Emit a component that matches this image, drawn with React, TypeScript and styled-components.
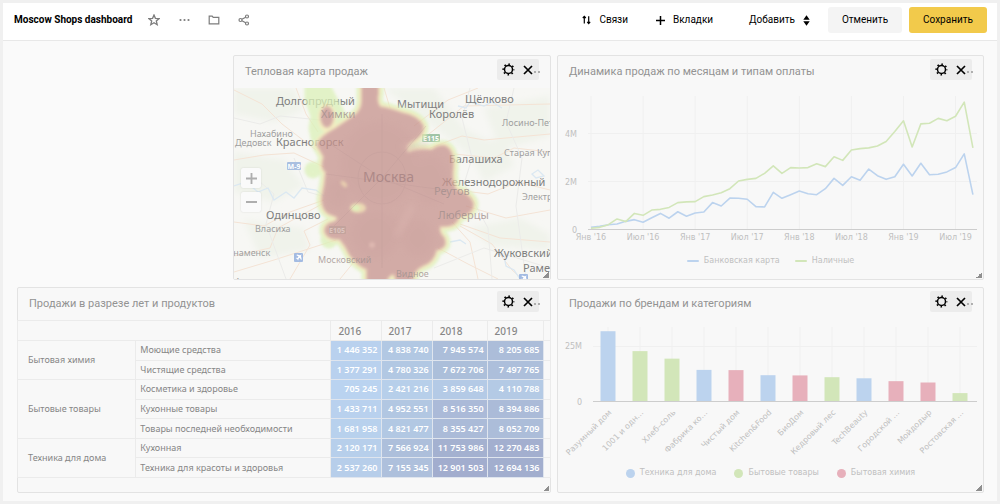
import React from "react";
import styled, { createGlobalStyle } from "styled-components";

const HEADING_FONT = `Roboto, "Noto Sans", sans-serif`;
const UI_FONT = `"Noto Sans", "Open Sans", sans-serif`;
const CHART_FONT = `"DejaVu Sans", sans-serif`;

const palette = {
  blue: "#bcd3ee",
  green: "#d2e6b9",
  pink: "#e7b0bb",
  grid: "#f0f0f0",
  axis: "#cdcdcd",
  label: "#c0c0c0",
};

const GlobalStyle = createGlobalStyle`
  *, *::before, *::after { box-sizing: border-box; }
  body {
    margin: 0;
    padding: 3px;
    background: #f0f0f0;
    font-family: ${UI_FONT};
    color: #000;
  }
  button { font-family: ${HEADING_FONT}; cursor: pointer; }
`;

const Page = styled.div`
  background: #fafafa;
`;

const Toolbar = styled.header`
  display: flex;
  align-items: center;
  justify-content: space-between;
  height: 38px;
  padding: 0 10px 3px 11px;
  background: #fff;
  border-bottom: 1px solid #e8e8e8;
`;

const ToolbarGroup = styled.div<{ $gap: number }>`
  display: flex;
  align-items: center;
  gap: ${(p) => p.$gap}px;
`;

const PageTitle = styled.h1`
  margin: 0;
  font-family: ${HEADING_FONT};
  font-size: 10px;
  line-height: 16px;
  font-weight: 700;
  white-space: nowrap;
`;

const IconButton = styled.button`
  display: flex;
  align-items: center;
  justify-content: center;
  width: 14px;
  height: 14px;
  padding: 0;
  border: 0;
  background: none;
  color: #7c7c7c;
`;

const TextButton = styled.button<{ $lead?: number }>`
  display: flex;
  align-items: center;
  gap: 8px;
  padding: 0 0 0 ${(p) => p.$lead ?? 10}px;
  border: 0;
  background: none;
  color: #000;
  font-size: 10px;
  line-height: 16px;
`;

const ActionButton = styled.button<{ $primary?: boolean }>`
  height: 26px;
  width: ${(p) => (p.$primary ? 78 : 74)}px;
  padding: 0;
  border: 0;
  border-radius: 3px;
  background: ${(p) => (p.$primary ? "#f2ca4b" : "#f4f4f4")};
  color: #000;
  font-size: 10px;
  line-height: 16px;
`;

const Board = styled.main`
  display: grid;
  grid-template-columns: 210fr 318fr 427fr;
  grid-template-rows: 225px 206px;
  gap: 7px 6px;
  padding: 14px 13px 8px 14px;
`;

const Card = styled.section<{ $columns: string }>`
  position: relative;
  grid-column: ${(p) => p.$columns};
  display: flex;
  flex-direction: column;
  min-width: 0;
  border: 1px solid #e3e3e3;
  border-radius: 2px;
  background: #f8f8f8;
`;

const CardHeader = styled.div`
  display: flex;
  align-items: flex-start;
  justify-content: space-between;
  height: 32px;
  padding: 3px 11px 0;
`;

const CardTitle = styled.h2`
  margin: 0;
  padding-top: 5px;
  font-family: ${HEADING_FONT};
  font-size: 11px;
  line-height: 16px;
  font-weight: 400;
  color: #939393;
  white-space: nowrap;
`;

const CardControls = styled.div`
  position: relative;
  display: flex;
  align-items: center;
  gap: 6px;
  height: 21px;
  padding: 0 4px;
  border-radius: 2px;
  background: #ececec;
`;

const ControlButton = styled(IconButton)`
  color: #000;
`;

const MoreDots = styled.span`
  position: absolute;
  right: -1px;
  top: 12px;
  display: flex;
  gap: 2px;
  &::before, &::after {
    content: "";
    width: 2px;
    height: 2px;
    border-radius: 1px;
    background: #9a9a9a;
  }
`;

const ResizeHandle = styled.span`
  position: absolute;
  right: 1px;
  bottom: 1px;
  width: 6px;
  height: 6px;
  background: linear-gradient(135deg, transparent 50%, #8f8f8f 50%);
`;

const MapArea = styled.div`
  position: relative;
  flex: 1;
  min-height: 0;
  overflow: hidden;
`;

const MapDrawing = styled.svg`
  display: block;
  width: 100%;
  height: 100%;
  font-family: ${UI_FONT};
`;

const MapZoom = styled.div`
  position: absolute;
  left: 7px;
  top: 80px;
  display: flex;
  flex-direction: column;
  gap: 4px;
`;

const MapZoomButton = styled.button`
  display: flex;
  align-items: center;
  justify-content: center;
  width: 20px;
  height: 20px;
  padding: 0;
  border: 0;
  border-radius: 2px;
  background: #fafafa;
  box-shadow: 0 0 2px rgba(0, 0, 0, 0.12);
  color: #aeaeae;
`;

const ChartDrawing = styled.svg`
  display: block;
  width: 100%;
  height: auto;
  font-family: ${CHART_FONT};
  font-size: 8px;
  fill: ${palette.label};
`;

const Legend = styled.ul<{ $gap: number }>`
  display: flex;
  justify-content: center;
  gap: ${(p) => p.$gap}px;
  margin: 1px 0 0;
  padding: 0;
  list-style: none;
`;

const LegendItem = styled.li`
  display: flex;
  align-items: center;
  gap: 5px;
  font-family: ${CHART_FONT};
  font-size: 8px;
  line-height: 16px;
  color: ${palette.label};
`;

const LegendMark = styled.span<{ $color: string; $line?: boolean }>`
  width: ${(p) => (p.$line ? 12 : 9)}px;
  height: ${(p) => (p.$line ? 2 : 9)}px;
  border-radius: ${(p) => (p.$line ? 1 : 5)}px;
  background: ${(p) => p.$color};
`;

const PivotTable = styled.table`
  width: calc(100% + 2px);
  height: 158px;
  margin: 0 -1px;
  border-collapse: collapse;
  table-layout: fixed;
  font-size: 9px;
  line-height: 14px;
  color: #868686;
`;

const Col = styled.col<{ $share: number }>`
  width: ${(p) => p.$share}%;
`;

const HeadCell = styled.th`
  height: 20px;
  padding: 0 0 0 7px;
  border: 1px solid #ebebeb;
  font-size: 10px;
  text-align: left;
  font-weight: 500;
`;

const GroupCell = styled.th`
  padding: 0 0 0 10px;
  border: 1px solid #ebebeb;
  text-align: left;
  font-weight: 400;
`;

const NameCell = styled(GroupCell)`
  padding-left: 4px;
`;

const ValueCell = styled.td<{ $tone: string }>`
  padding: 0 3px 0 0;
  border: 1px solid #dfe5ee;
  background: ${(p) => p.$tone};
  color: #fff;
  font-weight: 600;
  text-align: right;
  white-space: nowrap;
`;

const EdgeCell = styled.td`
  padding: 0;
  border: 1px solid #ebebeb;
`;

const GearIcon = () => (
  <svg width="13" height="13" viewBox="0 0 13 13" fill="none" stroke="currentColor" aria-hidden="true">
    <circle cx="6.5" cy="6.5" r="4" strokeWidth="1.5" />
    <circle cx="6.5" cy="6.5" r="5.300" strokeWidth="1.600" strokeDasharray="1.600 2.562" strokeDashoffset="0.800" />
  </svg>
);

const CrossIcon = () => (
  <svg width="10" height="10" viewBox="0 0 10 10" fill="none" stroke="currentColor" strokeWidth="1.700" aria-hidden="true">
    <path d="M1 1l8 8M9 1L1 9" />
  </svg>
);

const StarIcon = () => (
  <svg width="12" height="12" viewBox="0 0 12 12" fill="none" stroke="currentColor" strokeWidth="1.300" aria-hidden="true">
    <path d="M6 1l1.400 3.300 3.700.3-2.800 2.400.9 3.700L6 8.800l-3.200 1.900.9-3.700L.9 4.600l3.700-.3z" />
  </svg>
);

const DotsIcon = () => (
  <svg width="11" height="4" viewBox="0 0 11 4" fill="currentColor" aria-hidden="true">
    <circle cx="1.500" cy="2" r="1.100" />
    <circle cx="5.500" cy="2" r="1.100" />
    <circle cx="9.500" cy="2" r="1.100" />
  </svg>
);

const FolderIcon = () => (
  <svg width="12" height="10" viewBox="0 0 12 10" fill="none" stroke="currentColor" strokeWidth="1.200" aria-hidden="true">
    <path d="M1.200 8.800V1.200h3l1 1.200h5.600v6.400z" />
  </svg>
);

const ShareIcon = () => (
  <svg width="12" height="12" viewBox="0 0 12 12" fill="none" stroke="currentColor" strokeWidth="1.200" aria-hidden="true">
    <circle cx="2.500" cy="6" r="1.500" />
    <circle cx="9" cy="2.500" r="1.500" />
    <circle cx="9" cy="9.500" r="1.500" />
    <path d="M3.900 5.300l3.800-2.100M3.900 6.700l3.800 2.100" />
  </svg>
);

const SortIcon = () => (
  <svg width="9" height="10" viewBox="0 0 9 10" fill="none" stroke="currentColor" strokeWidth="1.200" aria-hidden="true">
    <path d="M2.300 8.500V1.500M.8 3l1.500-1.600L3.800 3M6.700 1.200v7.200M5.200 6.900l1.500 1.600 1.500-1.600" />
  </svg>
);

const PlusIcon = ({ size = 9 }: { size?: number }) => (
  <svg width={size} height={size} viewBox="0 0 9 9" stroke="currentColor" strokeWidth="1.500" aria-hidden="true">
    <path d="M4.500 0v9M0 4.500h9" />
  </svg>
);

const StepperIcon = () => (
  <svg width="7" height="11" viewBox="0 0 7 11" fill="currentColor" aria-hidden="true">
    <path d="M3.500 .3L6.700 4.700H.3zM3.500 10.700L.3 6.300h6.400z" />
  </svg>
);

function Widget({ title, columns, children }: { title: string; columns: string; children: React.ReactNode }) {
  return (
    <Card $columns={columns}>
      <CardHeader>
        <CardTitle>{title}</CardTitle>
        <CardControls>
          <ControlButton aria-label="Настроить"><GearIcon /></ControlButton>
          <ControlButton aria-label="Удалить"><CrossIcon /></ControlButton>
          <MoreDots />
        </CardControls>
      </CardHeader>
      {children}
      <ResizeHandle />
    </Card>
  );
}

type Place = [name: string, x: number, y: number];

const cities: Place[] = [
  ["Долгопрудный", 42, 17],
  ["Мытищи", 163, 20],
  ["Щёлково", 231, 15],
  ["Королёв", 195, 30],
  ["Красногорск", 42, 58],
  ["Балашиха", 215, 75],
  ["Железнодорожный", 208, 98],
  ["Одинцово", 32, 131],
  ["Жуковский", 260, 169],
  ["Раменское", 289, 184],
];

const hazyCities: Place[] = [
  ["Химки", 87, 30],
  ["Реутов", 200, 107],
  ["Люберцы", 204, 131],
];

const towns: Place[] = [
  ["Лосино-Петровский", 268, 38],
  ["Нахабино", 16, 49],
  ["Дедовск", 1, 58],
  ["Старая Купавна", 270, 68],
  ["Электроугли", 288, 112],
  ["Власиха", 21, 144],
  ["Знаменск", -6, 168],
  ["Апрелевка", 1, 197],
];

const hazyTowns: Place[] = [
  ["Московский", 84, 175],
  ["Видное", 162, 189],
];

const HEAT =
  "M128 -6 L128 10 Q129 22 120 28 Q108 36 101 41 Q86 49 83 57 Q87 63 90 69 Q86 80 92 84 Q91 98 88 110 Q88 124 98 127 Q108 130 100 134 Q90 136 91 144 Q94 152 106 151 Q112 158 116 167 Q124 178 133 181 L133 197 L151 197 Q154 186 160 186 L164 197 L178 197 Q178 182 188 178 Q200 174 202 162 Q214 160 210 150 Q204 144 206 138 Q222 140 225 128 Q240 126 239 115 Q236 106 222 102 Q217 92 219 80 Q220 62 211 58 Q204 57 198 62 Q184 60 174 65 Q170 60 176 54 Q190 48 189 38 Q184 28 168 25 Q154 20 146 19 Q142 14 144 6 L144 -6 Z";

const Labels = ({ places }: { places: Place[] }) => (
  <>
    {places.map(([name, x, y]) => <text key={name} x={x} y={y}>{name}</text>)}
  </>
);

function SalesMap() {
  return (
    <MapArea>
      <MapDrawing viewBox="0 0 316 191" preserveAspectRatio="xMidYMid slice" role="img" aria-label="Тепловая карта продаж">
        <defs>
          <filter id="soft" x="-10%" y="-10%" width="120%" height="120%"><feGaussianBlur stdDeviation="1.400" /></filter>
          <filter id="wash" x="-20%" y="-20%" width="140%" height="140%"><feGaussianBlur stdDeviation="3" /></filter>
        </defs>
        <rect width="316" height="191" fill="#f7f7f4" />
        <g fill="#f0f3eb" filter="url(#wash)">
          <path d="M0 0h60l10 22-30 12-40-8z" />
          <path d="M150 0h50l30 40 26 14-20 14-50-40z" />
          <path d="M250 20l66-12v40l-50 14z" />
          <path d="M230 52h40l10 26-30 16z" />
          <path d="M0 64l50 8 20 26-30 16-40-10z" />
          <path d="M10 132l60 8 6 22-50 8z" />
          <path d="M236 140l50-10 30 16v16l-60-4z" />
        </g>
        <g fill="none" stroke="#f4e3d5" strokeWidth="1">
          <path d="M0 2l28 14 20 20 34 26" />
          <path d="M0 72l30-5 30-2 30 14" />
          <path d="M0 168l36-8 8-20 44-24" />
          <path d="M0 184l40-12 62-20" />
          <path d="M0 134l30 4 26-14 34-12" />
          <path d="M106 191l18-22" />
          <path d="M56 191l20-34-6-14 24-12" />
          <path d="M180 38l34-26 30-12" />
          <path d="M190 50l40-32 86-2" />
          <path d="M196 60l32-12 22 4 66-6" />
          <path d="M220 66l40 4 20-10 36 4" />
          <path d="M222 102l32 4 30-12 32 8" />
          <path d="M226 138l32 18 20 26 10 9" />
          <path d="M226 136l40 14 50 4" />
          <path d="M218 134l18 20 8 37" />
          <path d="M232 118l40 12 44-8" />
          <path d="M204 160l30 16 30 15" />
          <path d="M62 0l10 26 12 18" />
          <path d="M150 0l6 20" />
        </g>
        <g fill="none" stroke="#ebebe9" strokeWidth="1">
          <path d="M0 30l26 6 20-8 40 4M10 80l30 26-8 30 20 55M60 70l14 34 14 4" />
          <path d="M236 0l-8 30 10 40-8 26 24 44 4 51M280 0l-8 34 16 36-6 48 10 73M200 180l50-20 66 20" />
        </g>
        <g fill="none" stroke="#dbe8f2" strokeWidth="1.300">
          <path d="M12 94l12 10 10-4 6 12 12-8 8 6 8-10 14 2 8 6" />
          <path d="M0 98l12-4 10 4" />
          <path d="M224 18l8 2 4-6 14 4 8-4 10 6" />
          <path d="M264 166l6 2 2 10 8 4 6 9M216 154l10-2 6 4" />
          <path d="M298 86l6-4 6 6-8 2z" />
        </g>
        <g fontSize="11" fill="#7e7e7e"><Labels places={cities} /></g>
        <g fontSize="9" fill="#9f9f9f"><Labels places={towns} /></g>
        <rect x="188" y="46" width="18" height="8" rx="1" fill="#a0c4a7" />
        <text x="197" y="53" fontSize="7" fontWeight="700" fill="#fff" textAnchor="middle">E115</text>
        <g filter="url(#soft)" opacity="0.75">
          <g fill="#dbf1b8" stroke="#dbf1b8" strokeWidth="11" strokeLinejoin="round">
            <path d={HEAT} />
            <path d="M76 -4h14l8 16 10 18-12 16-14 4-2-10 2-12-6-18z" />
            <circle cx="79" cy="82" r="3" />
            <circle cx="95" cy="152" r="3" />
          </g>
          <g fill="#f3ebb0" stroke="#f3ebb0" strokeWidth="6" strokeLinejoin="round">
            <path d={HEAT} />
            <ellipse cx="93" cy="30" rx="6" ry="11" />
          </g>
          <g fill="#c6928c" stroke="#d3a095" strokeWidth="2">
            <path d={HEAT} />
            <ellipse cx="93" cy="29" rx="6" ry="10" />
          </g>
        </g>
        <g filter="url(#wash)" fill="#c89f9c" opacity="0.2">
          <ellipse cx="146" cy="76" rx="40" ry="42" />
          <ellipse cx="196" cy="92" rx="18" ry="24" />
          <ellipse cx="142" cy="146" rx="24" ry="24" />
          <ellipse cx="184" cy="150" rx="16" ry="18" />
          <ellipse cx="104" cy="106" rx="10" ry="14" />
        </g>
        <g filter="url(#soft)">
          <ellipse cx="124" cy="120" rx="8" ry="5" fill="#ecd9b4" />
          <ellipse cx="122" cy="120" rx="4" ry="3" fill="#dff0bb" />
          <ellipse cx="110" cy="96" rx="4" ry="2" fill="#e9cfaf" transform="rotate(45 110 96)" />
          <circle cx="138" cy="157" r="3" fill="#dfb8b0" />
        </g>
        <path
          d="M162 148l8-14 8-16M168 58l14 2 12-6"
          fill="none"
          stroke="#dfbab4"
          strokeWidth="4"
          opacity="0.5"
          filter="url(#wash)"
        />
        <g fill="none" stroke="#b99695" strokeWidth="1" opacity="0.25">
          <ellipse cx="148" cy="90" rx="24" ry="26" />
          <path d="M148 26v154M96 56l52 34 62 26M96 142l52-52 44-52M92 86l118 16" />
        </g>
        <g fontSize="11" fill="#a38f8d" fillOpacity="0.8"><Labels places={hazyCities} /></g>
        <g fontSize="9" fill="#a1928f" fillOpacity="0.8"><Labels places={hazyTowns} /></g>
        <text x="129" y="94" fontSize="14" fill="#ad8988">Москва</text>
        <g fontSize="7" fontWeight="700" textAnchor="middle">
          <rect x="53" y="74" width="14" height="8" rx="1" fill="#a9bfe0" />
          <text x="60" y="81" fill="#fff">М-9</text>
          <rect x="95" y="138" width="17" height="8" rx="1" fill="#c3a39d" />
          <text x="103" y="145" fill="#dcc3be">E105</text>
        </g>
        {[[60, 165], [285, 186]].map(([x, y]) => (
          <g key={x} transform={`translate(${x} ${y})`}>
            <rect width="9" height="9" rx="1" fill="#a3bbe2" />
            <path d="M7.600 1.400L6 2.200 3 1.600l-.6.6 2.200 1.400-1.200 1.300-1.200-.1-.5.500 1.500.8.8 1.500.5-.5-.1-1.200 1.300-1.200 1.400 2.200.6-.6L7 3z" fill="#fff" />
          </g>
        ))}
      </MapDrawing>
      <MapZoom>
        <MapZoomButton aria-label="Приблизить">
          <PlusIcon size={11} />
        </MapZoomButton>
        <MapZoomButton aria-label="Отдалить">
          <svg width="11" height="2" aria-hidden="true"><rect width="11" height="2" fill="currentColor" /></svg>
        </MapZoomButton>
      </MapZoom>
    </MapArea>
  );
}

const cash = [
  0.05, 0.09, 0.2, 0.44, 0.33, 0.67, 0.59, 0.81, 0.84, 0.92, 1.12, 1.15, 1.16, 1.37, 1.44, 1.53, 1.7, 2.02, 2.09, 2.13,
  2.34, 2.65, 2.34, 2.58, 2.56, 2.58, 2.74, 2.62, 3.03, 2.88, 3.31, 3.37, 3.4, 3.48, 3.67, 4.08, 4.53, 3.44, 4.4, 4.43,
  4.63, 4.53, 4.72, 5.31, 3.4,
];
const card = [
  0.09, 0.13, 0.2, 0.23, 0.34, 0.41, 0.3, 0.49, 0.67, 0.47, 0.74, 0.55, 0.69, 0.73, 1.12, 0.98, 1.31, 1.3, 1.26, 0.95,
  0.94, 1.55, 1.3, 1.45, 1.6, 1.49, 1.45, 1.7, 2.13, 1.84, 2.2, 2.05, 2.52, 2.24, 2.09, 2.2, 2.72, 2.23, 2.76, 2.28, 2.3,
  2.4, 2.58, 3.15, 1.45,
];
const halfYears = ["Янв '16", "Июл '16", "Янв '17", "Июл '17", "Янв '18", "Июл '18", "Янв '19", "Июл '19"];

const monthX = (i: number) => 33 + i * 8.68;
const salesY = (v: number) => 141.5 - v * 24;
const toPoints = (values: number[]) => values.map((v, i) => `${monthX(i)},${salesY(v)}`).join(" ");

function PaymentsChart() {
  return (
    <>
      <ChartDrawing viewBox="0 0 425 164" role="img" aria-label="Динамика продаж">
        <g stroke={palette.grid}>
          {halfYears.map((label, i) => <path key={label} d={`M${monthX(i * 6)} 8V141`} />)}
          <path d="M30 45.500H419M30 93.500H419" />
        </g>
        <path d="M30 141.500H419" stroke={palette.axis} />
        <g textAnchor="end">
          <text x="19" y="49">4M</text>
          <text x="19" y="97">2M</text>
          <text x="19" y="145">0</text>
        </g>
        <g textAnchor="middle">
          {halfYears.map((label, i) => <text key={label} x={monthX(i * 6)} y="152">{label}</text>)}
        </g>
        <g fill="none" strokeWidth="1.600" strokeLinejoin="round">
          <polyline points={toPoints(card)} stroke={palette.blue} />
          <polyline points={toPoints(cash)} stroke={palette.green} />
        </g>
      </ChartDrawing>
      <Legend $gap={15}>
        <LegendItem><LegendMark $line $color={palette.blue} />Банковская карта</LegendItem>
        <LegendItem><LegendMark $line $color={palette.green} />Наличные</LegendItem>
      </Legend>
    </>
  );
}

type Category = "blue" | "green" | "pink";
const brands: [string, number, Category][] = [
  ["Разумный дом", 31.8, "blue"],
  ["1001 и одн…", 22.8, "green"],
  ["Хлеб–соль", 19.4, "green"],
  ["Фабрика ко…", 14.3, "blue"],
  ["Чистый дом", 14.2, "pink"],
  ["Kitchen&Food", 11.9, "blue"],
  ["БиоДом", 11.8, "pink"],
  ["Кедровый лес", 11, "green"],
  ["TechBeauty", 10.5, "blue"],
  ["Городской …", 9.2, "pink"],
  ["Мойдодыр", 8.6, "pink"],
  ["Ростовская …", 3.8, "green"],
];

const BAR_BASE = 81.5;
const brandX = (i: number) => 50 + i * 32;

function BrandsChart() {
  return (
    <>
      <ChartDrawing viewBox="0 0 425 144" role="img" aria-label="Продажи по брендам">
        <g stroke={palette.grid}>
          {brands.map(([name], i) => <path key={name} d={`M${brandX(i)} 7V81`} />)}
          <path d="M35 26.500H419" />
        </g>
        {brands.map(([name, value, category], i) => (
          <rect
            key={name}
            x={brandX(i) - 7.5}
            y={BAR_BASE - value * 2.21}
            width="15"
            height={value * 2.21}
            fill={palette[category]}
          />
        ))}
        <path d={`M35 ${BAR_BASE}H419`} stroke={palette.axis} />
        <g textAnchor="end">
          <text x="24" y="29">25M</text>
          <text x="24" y="85">0</text>
          {brands.map(([name], i) => (
            <text key={name} transform={`translate(${brandX(i) + 4} 93) rotate(-45)`}>{name}</text>
          ))}
        </g>
      </ChartDrawing>
      <Legend $gap={18}>
        <LegendItem><LegendMark $color={palette.blue} />Техника для дома</LegendItem>
        <LegendItem><LegendMark $color={palette.green} />Бытовые товары</LegendItem>
        <LegendItem><LegendMark $color={palette.pink} />Бытовая химия</LegendItem>
      </Legend>
    </>
  );
}

type Row = [name: string, values: string[], tones: string[]];
const groups: { name: string; rows: Row[] }[] = [
  {
    name: "Бытовая химия",
    rows: [
      ["Моющие средства", ["1 446 352", "4 838 740", "7 945 574", "8 205 685"], ["#b9d1ee", "#b2c8e3", "#acbeda", "#acbdd9"]],
      ["Чистящие средства", ["1 377 291", "4 780 326", "7 672 706", "7 497 765"], ["#b9d1ee", "#b2c8e3", "#acbfda", "#adbfdb"]],
    ],
  },
  {
    name: "Бытовые товары",
    rows: [
      ["Косметика и здоровье", ["705 245", "2 421 216", "3 859 648", "4 110 788"], ["#bad3f0", "#b7cfea", "#b4cae6", "#b4cae5"]],
      ["Кухонные товары", ["1 433 711", "4 952 551", "8 516 350", "8 394 886"], ["#b9d1ee", "#b2c7e2", "#abbad8", "#abbbd8"]],
      ["Товары последней необходимости", ["1 681 958", "4 821 477", "8 355 427", "8 052 709"], ["#b8d1ed", "#b2c8e3", "#abbbd8", "#acbdd9"]],
    ],
  },
  {
    name: "Техника для дома",
    rows: [
      ["Кухонная", ["2 120 171", "7 566 924", "11 753 986", "12 270 483"], ["#b7cfeb", "#adbfdb", "#a4b1d0", "#a3afcf"]],
      ["Техника для красоты и здоровья", ["2 537 260", "7 155 345", "12 901 503", "12 694 136"], ["#b7ceea", "#aec0dc", "#a2adce", "#a2aece"]],
    ],
  },
];

function ProductsTable() {
  return (
    <PivotTable>
      <colgroup>
        {[22.2, 36.6, 9.4, 9.6, 10.3, 10.5, 1.4].map((share, i) => <Col key={i} $share={share} />)}
      </colgroup>
      <thead>
        <tr>
          <HeadCell as="td" colSpan={2} />
          {["2016", "2017", "2018", "2019"].map((year) => <HeadCell key={year} scope="col">{year}</HeadCell>)}
          <EdgeCell />
        </tr>
      </thead>
      <tbody>
        {groups.map((group) =>
          group.rows.map(([name, values, tones], i) => (
            <tr key={name}>
              {i === 0 && <GroupCell scope="rowgroup" rowSpan={group.rows.length}>{group.name}</GroupCell>}
              <NameCell scope="row">{name}</NameCell>
              {values.map((value, j) => <ValueCell key={j} $tone={tones[j]}>{value}</ValueCell>)}
              <EdgeCell />
            </tr>
          )),
        )}
      </tbody>
    </PivotTable>
  );
}

export default function App() {
  return (
    <>
      <GlobalStyle />
      <Page>
        <Toolbar>
          <ToolbarGroup $gap={15}>
            <PageTitle>Moscow Shops dashboard</PageTitle>
            <ToolbarGroup $gap={16}>
              <IconButton aria-label="В избранное"><StarIcon /></IconButton>
              <IconButton aria-label="Ещё"><DotsIcon /></IconButton>
              <IconButton aria-label="Папка"><FolderIcon /></IconButton>
              <IconButton aria-label="Поделиться"><ShareIcon /></IconButton>
            </ToolbarGroup>
          </ToolbarGroup>
          <ToolbarGroup $gap={7}>
            <ToolbarGroup $gap={18}>
              <TextButton><SortIcon />Связи</TextButton>
              <TextButton><PlusIcon />Вкладки</TextButton>
              <TextButton $lead={18}>Добавить<StepperIcon /></TextButton>
              <ActionButton>Отменить</ActionButton>
            </ToolbarGroup>
            <ActionButton $primary>Сохранить</ActionButton>
          </ToolbarGroup>
        </Toolbar>
        <Board>
          <Widget title="Тепловая карта продаж" columns="2"><SalesMap /></Widget>
          <Widget title="Динамика продаж по месяцам и типам оплаты" columns="3"><PaymentsChart /></Widget>
          <Widget title="Продажи в разрезе лет и продуктов" columns="1 / span 2"><ProductsTable /></Widget>
          <Widget title="Продажи по брендам и категориям" columns="3"><BrandsChart /></Widget>
        </Board>
      </Page>
    </>
  );
}
